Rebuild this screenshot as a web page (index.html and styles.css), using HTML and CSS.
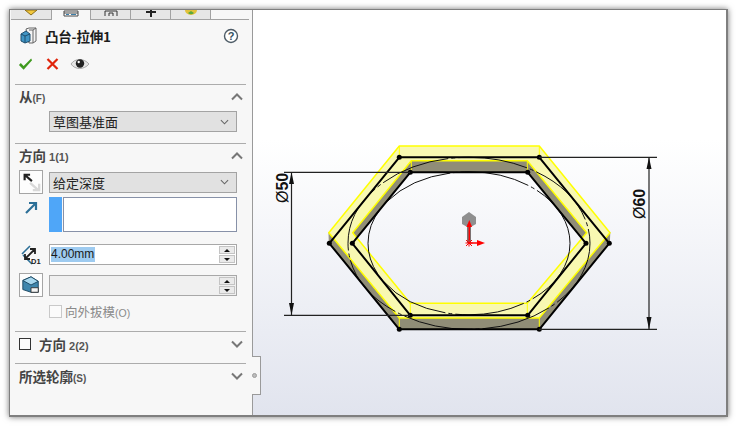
FILE: index.html
```html
<!DOCTYPE html>
<html lang="zh">
<head>
<meta charset="utf-8">
<title>凸台-拉伸1</title>
<link rel="stylesheet" href="styles.css">
</head>
<body>
<div class="window">
  <aside class="panel">
    <div class="tabs">
      <div class="tab first">
        <svg class="tab-icon" viewBox="0 0 20 9"><path d="M4 0 10 5 16 0Z" fill="#f2c73c" stroke="#8a6d1a"/></svg>
      </div>
      <div class="tab active">
        <svg class="tab-icon" viewBox="0 0 20 9"><path d="M3 1H17V6H3ZM3 3H17" fill="#fff" stroke="#444"/><path d="M5 4.500H8M10 4.500H15" stroke="#3b7ea8"/></svg>
      </div>
      <div class="tab">
        <svg class="tab-icon" viewBox="0 0 20 9"><path d="M4 6V1H16V6M8 6V3H12V6" fill="none" stroke="#333"/></svg>
      </div>
      <div class="tab">
        <svg class="tab-icon" viewBox="0 0 20 9"><path d="M10 0V7M5 2H15" fill="none" stroke="#222" stroke-width="2"/></svg>
      </div>
      <div class="tab">
        <svg class="tab-icon" viewBox="0 0 20 9"><path d="M4 0A6 5 0 0 0 16 0Z" fill="#e2c23a"/><path d="M7 3A4 4 0 0 0 13 3L10 1Z" fill="#5aa93c"/></svg>
      </div>
      <div class="tab-rest"></div>
    </div>

    <div class="title-row">
      <svg class="feature-icon" viewBox="0 0 18 18">
        <path d="M6 2 9 1H16V14L13 16H9Z" fill="#f4f4f4" stroke="#666"/>
        <path d="M13 16V3L16 1M9 3H13" fill="none" stroke="#666"/>
        <path d="M1 7 6 4 10 7V14L5 16 1 14Z" fill="#3f94c4" stroke="#1e4e6e"/>
        <path d="M1 7 5 9 10 7M5 9V16" fill="none" stroke="#1e4e6e"/>
      </svg>
      <span class="title">凸台-拉伸1</span>
      <svg class="help" viewBox="0 0 16 16">
        <circle cx="8" cy="8" r="6.500" fill="#fff" stroke="#4d5b66" stroke-width="1.400"/>
        <text x="8" y="11.800" class="help-mark">?</text>
      </svg>
    </div>

    <div class="action-row">
      <svg class="act" viewBox="0 0 16 14"><path d="M1 8 3 6 6 9 14 1 15 3 6 13Z" fill="#3f9a1e"/></svg>
      <svg class="act" viewBox="0 0 14 14"><path d="M2 2 12 12M12 2 2 12" stroke="#e0240a" stroke-width="2.200" fill="none"/></svg>
      <svg class="eye" viewBox="0 0 20 14">
        <path d="M1 7C5 1 14 1 19 7 14 13 5 13 1 7Z" fill="#e6e6e6" stroke="#aaa"/>
        <circle cx="10" cy="6.500" r="4.200" fill="#222"/>
        <circle cx="8.700" cy="5" r="1.200" fill="#fff"/>
      </svg>
    </div>

    <section class="group group-from">
      <div class="group-head">
        <span class="head-text">从<small>(F)</small></span>
        <svg class="chev open" viewBox="0 0 12 8"><path d="M1 6.500 6 1.500 11 6.500" /></svg>
      </div>
      <div class="select-row">
        <div class="select"><span>草图基准面</span><svg class="sel-chev" viewBox="0 0 10 6"><path d="M1 1 5 5 9 1"/></svg></div>
      </div>
    </section>

    <section class="group group-dir">
      <div class="group-head">
        <span class="head-text">方向 <small class="num">1(1)</small></span>
        <svg class="chev open" viewBox="0 0 12 8"><path d="M1 6.500 6 1.500 11 6.500" /></svg>
      </div>
      <div class="row row-a">
        <div class="icon-btn">
          <svg viewBox="0 0 22 22"><path d="M10 12 19 20M13 20H20V13" fill="none" stroke="#d8d8d8" stroke-width="2.600"/><path d="M12 10 4 3M4 9V3H10" fill="none" stroke="#222" stroke-width="2.400"/></svg>
        </div>
        <div class="select"><span>给定深度</span><svg class="sel-chev" viewBox="0 0 10 6"><path d="M1 1 5 5 9 1"/></svg></div>
      </div>
      <div class="row row-b">
        <svg class="side-icon" viewBox="0 0 14 14"><path d="M2 12 11 3M5 2H12V9" fill="none" stroke="#2c6f97" stroke-width="2.200"/></svg>
        <div class="swatch"></div>
        <div class="list"></div>
      </div>
      <div class="row row-c">
        <svg class="side-icon depth" viewBox="0 0 20 20">
          <path d="M1 9 9 1M11 19 2 10" fill="none" stroke="#2c6f97" stroke-width="1.600"/>
          <path d="M5 13 13 5M9 4H14V9M4 9V14H9" fill="none" stroke="#222" stroke-width="1.800"/>
          <text x="10" y="19" class="d1">D1</text>
        </svg>
        <div class="field">
          <span class="value">4.00mm</span>
          <div class="spin"><i class="up"></i><i class="down"></i></div>
        </div>
      </div>
      <div class="row row-d">
        <div class="icon-btn">
          <svg viewBox="0 0 22 22"><path d="M2 6 11 2 19 7V19H11L2 16Z" fill="#3f86ad" stroke="#17435e"/><path d="M2 6 11 11 19 7 11 2Z" fill="#a8d8ef" stroke="#17435e"/><path d="M11 14H19V19H11Z" fill="#f5f5f5" stroke="#333"/></svg>
        </div>
        <div class="field disabled">
          <div class="spin"><i class="up"></i><i class="down"></i></div>
        </div>
      </div>
      <div class="draft-row">
        <span class="check faint"></span>
        <span class="draft-label">向外拔模<small>(O)</small></span>
      </div>
    </section>

    <section class="group group-closed">
      <div class="group-head closed">
        <span class="check"></span>
        <span class="head-text">方向 <small class="num">2(2)</small></span>
        <svg class="chev" viewBox="0 0 12 8"><path d="M1 1.500 6 6.500 11 1.500" /></svg>
      </div>
    </section>

    <section class="group group-closed">
      <div class="group-head closed">
        <span class="head-text">所选轮廓<small>(S)</small></span>
        <svg class="chev" viewBox="0 0 12 8"><path d="M1 1.500 6 6.500 11 1.500" /></svg>
      </div>
    </section>
  </aside>

  <div class="handle"><span class="handle-dot"></span></div>

  <main class="viewport">
    <svg class="canvas" viewBox="253 10 473 405">
      <!-- side walls -->
      <path class="wall" d="M329.300 243.300 399.300 329.300H539.300L609.300 243.300 609.800 232.500 539.300 318H399.300L329 232.500Z"/>
      <path class="wall" d="M352.300 243.300 410.300 172.300H527.700L586 243.300 586.500 232 527.300 160.700H411.300L352.700 232.500Z"/>
      <!-- extruded face -->
      <path class="face" d="M399.300 146H539.300L610 232.800 539.300 318H399.300L328.800 232.800ZM411.300 160.700 352.700 232.800 410.300 303.300H527.300L586.700 232.800 527.300 160.700Z"/>
      <path class="edge" d="M411.300 160.700V172.300M527.300 160.700V172.300M399.300 318V329M539.300 318V329M410.300 303.300V315.300M527.300 303.300V315.300M399.300 146V157M539.300 146V157"/>
      <!-- sketch circles -->
      <ellipse class="circle" cx="469" cy="243.300" rx="121" ry="86"/>
      <ellipse class="circle" cx="469" cy="243.300" rx="101" ry="71.500"/>
      <!-- sketch hexagons -->
      <path class="sketch" d="M399.300 157.300H539.300L609.300 243.300 539.300 329.300H399.300L329.300 243.300Z"/>
      <path class="sketch" d="M410.300 172.300H527.700L586 243.300 527.700 315.300H410.300L352.300 243.300Z"/>
      <g class="nodes">
        <circle cx="399.300" cy="157.300" r="2.500"/><circle cx="539.300" cy="157.300" r="2.500"/>
        <circle cx="609.300" cy="243.300" r="2.500"/><circle cx="539.300" cy="329.300" r="2.500"/>
        <circle cx="399.300" cy="329.300" r="2.500"/><circle cx="329.300" cy="243.300" r="2.500"/>
        <circle cx="410.300" cy="172.300" r="2.500"/><circle cx="527.700" cy="172.300" r="2.500"/>
        <circle cx="586" cy="243.300" r="2.500"/><circle cx="527.700" cy="315.300" r="2.500"/>
        <circle cx="410.300" cy="315.300" r="2.500"/><circle cx="352.300" cy="243.300" r="2.500"/>
      </g>
      <!-- dimensions -->
      <path class="dim" d="M284 172.300H410M284 315.300H410M291.500 172.300V315.300"/>
      <path class="dim" d="M539 157.300H657M539 329.300H657M649 157.300V329.300"/>
      <path class="arrow" d="M291.500 172.300 294 184H289ZM291.500 315.300 294 303H289ZM649 157.300 651.500 169H646.500ZM649 329.300 651.500 317H646.500Z"/>
      <text class="dim-text" transform="translate(287.500 203) rotate(-90)"><tspan class="phi">Ø</tspan>50</text>
      <text class="dim-text" transform="translate(645 219) rotate(-90)"><tspan class="phi">Ø</tspan>60</text>
      <!-- origin -->
      <path d="M469 212 476 217V224L469 228 462 224V217Z" fill="#8f8f8f"/>
      <path d="M467 224H471V243H467Z" fill="#777"/>
      <path d="M469.300 240V226" stroke="#f00" stroke-width="1.500"/>
      <path d="M469.300 220 472 227H466.500Z" fill="#f00"/>
      <path d="M469 243H478" stroke="#f00" stroke-width="1.500"/>
      <path d="M485 243 477 240V246Z" fill="#f00"/>
      <path d="M466 240 472 246M472 240 466 246M465.500 243H472.500M469 239.500V246.500" stroke="#f00"/>
    </svg>
  </main>
</div>
</body>
</html>
```
FILE: styles.css
```css
* { box-sizing: border-box; }

html, body { margin: 0; padding: 0; background: #fff; }

body {
  width: 736px;
  height: 426px;
  overflow: hidden;
  font-family: "Noto Sans CJK SC", "Liberation Sans", sans-serif;
  color: #222;
}

.window {
  position: relative;
  display: flex;
  width: 719px;
  height: 408px;
  margin: 9px 0 0 9px;
  border: 1px solid #7f7f7f;
  border-right-width: 2px;
  border-bottom-width: 2px;
  box-shadow: 0 0 6px rgba(0, 0, 0, .55);
  background: #f7f7f7;
}

/* Panel */
.panel {
  flex: 0 0 243px;
  width: 243px;
  padding: 0 6px 0 5px;
  border-right: 1px solid #9a9a9a;
  background: #f7f7f7;
}

.tabs {
  display: flex;
  height: 10px;
  margin: 0 -6px 0 -5px;
  padding-left: 1px;
}

.tab {
  width: 40px;
  height: 10px;
  border-right: 1px solid #a2a2a2;
  border-bottom: 1px solid #a2a2a2;
  background: #e6e6e6;
  display: flex;
  justify-content: center;
}

.tab.first { width: 41px; }
.tab.active { width: 39px; background: #f7f7f7; border-bottom: 0; }
.tab-rest { flex: 1; margin-right: 3px; border-bottom: 1px solid #a2a2a2; }
.tab-icon { width: 20px; height: 9px; display: block; }

.title-row {
  display: flex;
  align-items: center;
  height: 30px;
  margin-top: 1px;
  padding-left: 5px;
}

.feature-icon { width: 18px; height: 18px; flex: none; }

.title {
  margin-left: 7px;
  font-size: 13.500px;
  font-weight: 700;
  letter-spacing: -.2px;
  color: #1c1c1c;
}

.help { width: 16px; height: 16px; margin-left: auto; margin-right: 7px; }
.help-mark { font: 700 11px "Liberation Sans", sans-serif; fill: #33505f; text-anchor: middle; }

.action-row {
  display: flex;
  align-items: center;
  height: 21px;
  margin-top: 2px;
  padding-left: 3px;
}

.act { width: 15px; height: 14px; margin-right: 12px; }
.eye { width: 20px; height: 14px; margin-left: -2px; }

.group { border-top: 1px solid #acacac; }
.group-from { margin-top: 10px; height: 59px; }
.group-dir { height: 188px; }
.group-closed { height: 32px; }

.group-head {
  display: flex;
  align-items: center;
  height: 26px;
  padding: 0 3px 4px 4px;
}

.group-head.closed { height: 31px; padding-bottom: 7px; }

.head-text {
  font-size: 13.500px;
  font-weight: 700;
  color: #444;
}

.head-text small { font-size: 10px; font-weight: 700; color: #555; font-family: "Liberation Sans", sans-serif; }
.head-text .num { font-size: 11px; }

.chev {
  width: 12px;
  height: 8px;
  margin-left: auto;
  fill: none;
  stroke: #777;
  stroke-width: 2;
}

.chev.open { margin-top: 2px; }

.select-row { padding-left: 34px; margin-right: 2px; }

.select {
  display: flex;
  align-items: center;
  justify-content: space-between;
  width: 188px;
  height: 21px;
  padding: 0 7px 0 3px;
  border: 1px solid #a3a3a3;
  background: #e1e1e1;
  font-size: 13px;
  color: #222;
}

.sel-chev { width: 9px; height: 6px; fill: none; stroke: #666; stroke-width: 1.200; }

.row { display: flex; margin-left: 4px; }

.icon-btn {
  flex: none;
  width: 24px;
  height: 24px;
  padding: 1px;
  border: 1px solid #a5a5a5;
  background: #fdfdfd;
  margin-right: 6px;
}

.icon-btn svg { display: block; width: 20px; height: 20px; }

.row-a { align-items: center; height: 24px; }

.row-b { height: 36px; margin-top: 3px; }
.side-icon { flex: none; width: 14px; height: 14px; margin: 4px 11px 0 5px; }
.swatch { flex: none; width: 13px; height: 35px; background: #4fa6f8; }
.list { width: 174px; height: 35px; margin-left: 1px; border: 1px solid #8791a8; background: #fff; }

.row-c { align-items: center; height: 21px; margin-top: 11px; }
.side-icon.depth { width: 20px; height: 20px; margin: 0 8px 0 2px; }
.d1 { font: 700 7.500px "Liberation Sans", sans-serif; fill: #222; }

.field {
  position: relative;
  display: flex;
  align-items: center;
  width: 188px;
  height: 21px;
  padding-left: 1px;
  border: 1px solid #a8a8a8;
  background: #fff;
}

.value {
  padding: 0 1px 0 0;
  background: #9ecbf0;
  font: 12px/15px "Liberation Sans", sans-serif;
  color: #1a1a1a;
}

.spin {
  display: flex;
  flex-direction: column;
  gap: 1px;
  width: 16px;
  height: 17px;
  margin-left: auto;
  margin-right: 1px;
}

.spin i {
  position: relative;
  flex: 1;
  border: 1px solid #c4c4c4;
  background: #eaeaea;
}

.spin i::after {
  content: "";
  position: absolute;
  left: 4px;
  top: 2px;
  border-left: 3px solid transparent;
  border-right: 3px solid transparent;
}

.spin .up::after { border-bottom: 3px solid #111; }
.spin .down::after { border-top: 3px solid #111; }

.row-d { align-items: center; height: 24px; margin-top: 8px; }
.field.disabled { background: #f0f0f0; }

.draft-row {
  display: flex;
  align-items: center;
  height: 13px;
  margin: 8px 0 0 34px;
}

.check {
  flex: none;
  width: 12px;
  height: 12px;
  border: 1px solid #333;
  background: #fbfbfb;
}

.check.faint { width: 13px; height: 13px; border-color: #c9c9c9; }

.draft-label { margin-left: 3px; font-size: 12.500px; color: #8a8a8a; white-space: nowrap; }
.draft-label small { font-size: 10.500px; font-family: "Liberation Sans", sans-serif; }

.closed .check { margin-right: 8px; }

/* Flyout handle */
.handle {
  position: absolute;
  left: 242px;
  top: 346px;
  width: 9px;
  height: 39px;
  border: 1px solid #9a9a9a;
  border-left: 0;
  background: #f7f7f7;
}

.handle-dot {
  position: absolute;
  left: 0;
  top: 16px;
  width: 5px;
  height: 5px;
  border-radius: 50%;
  background: #bcbcbc;
  border: 1px solid #9c9c9c;
}

/* Graphics area */
.viewport {
  flex: 1;
  background: linear-gradient(#fff 0, #fff 32%, #e1e4ee 100%);
}

.canvas { display: block; width: 100%; height: 100%; }

.wall { fill: #908d77; stroke: #908d77; }
.face { fill: #f8f8b2; fill-rule: evenodd; stroke: #ffff00; stroke-width: 1.500; stroke-linejoin: round; }
.edge { fill: none; stroke: #ffff00; stroke-width: 1; }
.circle { fill: none; stroke: #111; stroke-width: 1; stroke-dasharray: 70 3 4 3; }
.sketch { fill: none; stroke: #000; stroke-width: 2; stroke-linejoin: round; }
.nodes circle { fill: #000; }
.dim { fill: none; stroke: #222; stroke-width: 1.200; }
.arrow { fill: #111; }
.dim-text { font: 700 16px "Liberation Sans", sans-serif; fill: #111; }
.phi { font-weight: 400; }
```
